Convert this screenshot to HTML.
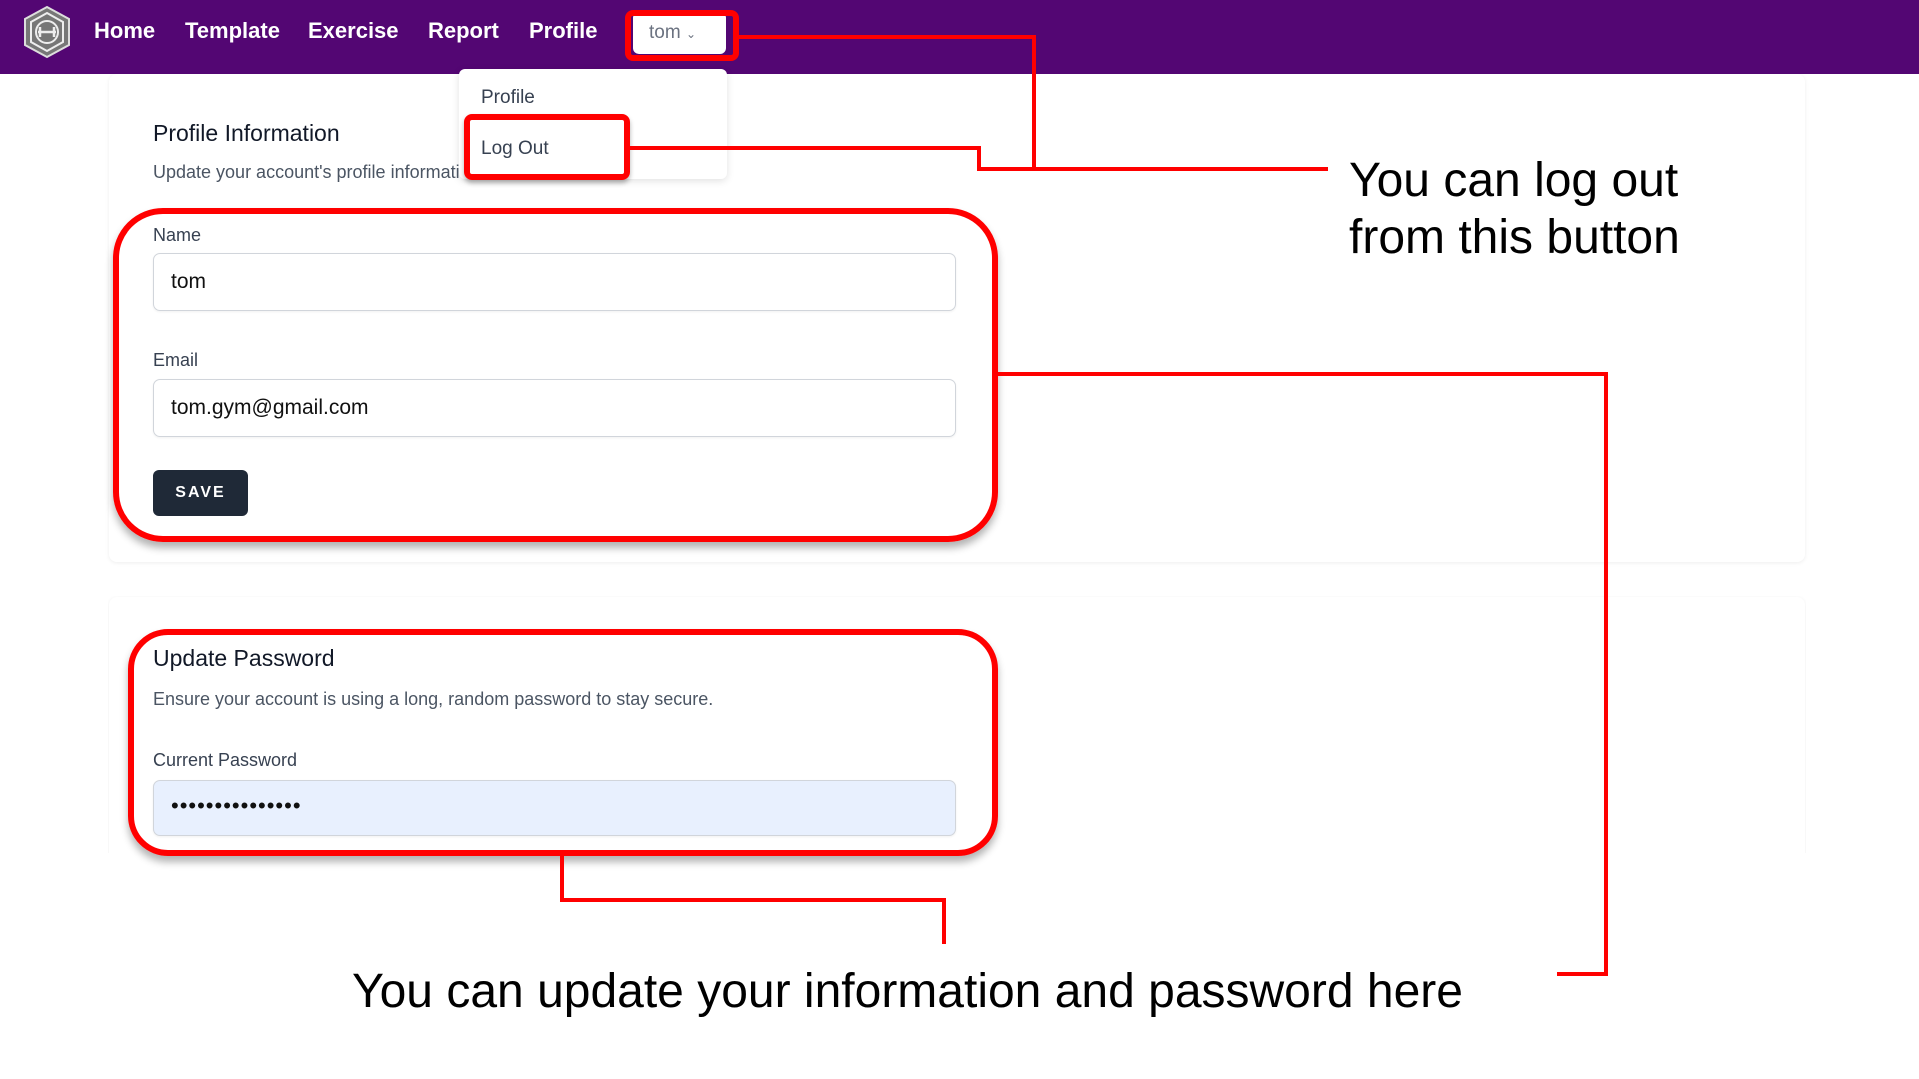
<!DOCTYPE html>
<html><head><meta charset="utf-8"><style>
*{margin:0;padding:0;box-sizing:border-box}
body{width:1919px;height:1079px;position:relative;background:#fff;font-family:"Liberation Sans",sans-serif;overflow:hidden}
.abs{position:absolute}
.nav{left:0;top:0;width:1919px;height:74px;background:#530673}
.nl{top:18px;color:#fff;font-weight:bold;font-size:22px}
.card{background:#fff;border-radius:8px;box-shadow:0 1px 4px rgba(0,0,0,.07)}
.inp{left:153px;width:803px;height:58px;border:1px solid #d1d5db;border-radius:7px;box-shadow:0 1px 2px rgba(0,0,0,.06);font-size:21px;color:#111;padding:16px 0 0 17px}
.lbl{left:153px;font-size:18px;color:#374151}
.red{border:6px solid #f00;border-radius:50px;box-shadow:0 6px 8px rgba(0,0,0,.3)}
.ln{background:#f00}
.big{font-size:49px;color:#000}
</style></head><body>
<div class="abs card" style="left:109px;top:74px;width:1696px;height:488px"></div>
<div class="abs" style="left:108px;top:596px;width:1698px;height:257px;overflow:hidden"><div class="card" style="margin:1px;height:300px"></div></div>
<div class="abs nav"></div>
<svg class="abs" style="left:22px;top:5px" width="50" height="54" viewBox="0 0 50 54">
<polygon points="25,2 47,14 47,40 25,52 3,40 3,14" fill="#777" stroke="#ddd" stroke-width="2"/>
<polygon points="25,8 41,17 41,37 25,46 9,37 9,17" fill="none" stroke="#eee" stroke-width="2"/>
<circle cx="25" cy="27" r="11" fill="none" stroke="#eee" stroke-width="2"/>
<path d="M16 27H34M18 22V32M32 22V32" stroke="#eee" stroke-width="2.5"/>
</svg>
<div class="abs nl" style="left:94px">Home</div>
<div class="abs nl" style="left:185px">Template</div>
<div class="abs nl" style="left:308px">Exercise</div>
<div class="abs nl" style="left:428px">Report</div>
<div class="abs nl" style="left:529px">Profile</div>
<div class="abs" style="left:633px;top:12px;width:93px;height:42px;background:#fff;border-radius:6px;color:#6b7280;font-size:19px;padding:10px 0 0 16px">tom <span style="font-size:12px">&#8964;</span></div>
<div class="abs red" style="left:625px;top:10px;width:114px;height:51px;border-radius:8px;box-shadow:none"></div>
<div class="abs" style="left:459px;top:69px;width:268px;height:110px;background:#fff;border-radius:6px;box-shadow:0 2px 8px rgba(0,0,0,.12)"></div>
<div class="abs" style="left:481px;top:87px;font-size:19px;color:#374151">Profile</div>
<div class="abs" style="left:481px;top:138px;font-size:19px;color:#374151">Log Out</div>
<div class="abs red" style="left:464px;top:114px;width:166px;height:66px;border-radius:8px;box-shadow:0 3px 5px rgba(0,0,0,.3)"></div>

<div class="abs" style="left:153px;top:120px;font-size:23px;color:#111827">Profile Information</div>
<div class="abs" style="left:153px;top:162px;font-size:18px;color:#4b5563;width:307px;overflow:hidden;white-space:nowrap">Update your account's profile information</div>
<div class="abs lbl" style="left:153px;top:225px">Name</div>
<div class="abs inp" style="top:253px">tom</div>
<div class="abs lbl" style="top:350px">Email</div>
<div class="abs inp" style="top:379px">tom.gym@gmail.com</div>
<div class="abs" style="left:153px;top:470px;width:95px;height:46px;background:#1f2937;border-radius:6px;color:#fff;font-weight:bold;font-size:16px;letter-spacing:2px;text-align:center;padding-top:14px">SAVE</div>
<div class="abs red" style="left:113px;top:208px;width:885px;height:334px"></div>

<div class="abs" style="left:153px;top:645px;font-size:23px;color:#111827">Update Password</div>
<div class="abs" style="left:153px;top:689px;font-size:18px;color:#4b5563">Ensure your account is using a long, random password to stay secure.</div>
<div class="abs lbl" style="top:750px">Current Password</div>
<div class="abs inp" style="top:780px;height:56px;background:#e8f0fe;font-size:22px;letter-spacing:1px;padding-top:12px">&#8226;&#8226;&#8226;&#8226;&#8226;&#8226;&#8226;&#8226;&#8226;&#8226;&#8226;&#8226;&#8226;&#8226;&#8226;</div>
<div class="abs red" style="left:128px;top:629px;width:870px;height:227px;border-radius:40px"></div>

<div class="abs ln" style="left:739px;top:35px;width:297px;height:4px"></div>
<div class="abs ln" style="left:1032px;top:35px;width:4px;height:134px"></div>
<div class="abs ln" style="left:630px;top:146px;width:351px;height:4px"></div>
<div class="abs ln" style="left:977px;top:146px;width:4px;height:23px"></div>
<div class="abs ln" style="left:977px;top:167px;width:351px;height:4px"></div>
<div class="abs ln" style="left:998px;top:372px;width:610px;height:4px"></div>
<div class="abs ln" style="left:1604px;top:372px;width:4px;height:604px"></div>
<div class="abs ln" style="left:1557px;top:972px;width:51px;height:4px"></div>
<div class="abs ln" style="left:560px;top:856px;width:4px;height:46px"></div>
<div class="abs ln" style="left:560px;top:898px;width:386px;height:4px"></div>
<div class="abs ln" style="left:942px;top:898px;width:4px;height:46px"></div>

<div class="abs big" style="left:1349px;top:152px;line-height:57px;font-size:48px">You can log out<br>from this button</div>
<div class="abs big" style="left:352px;top:964px;width:1110px;text-align:center;white-space:nowrap;font-size:48px">You can update your information and password here</div>
</body></html>
